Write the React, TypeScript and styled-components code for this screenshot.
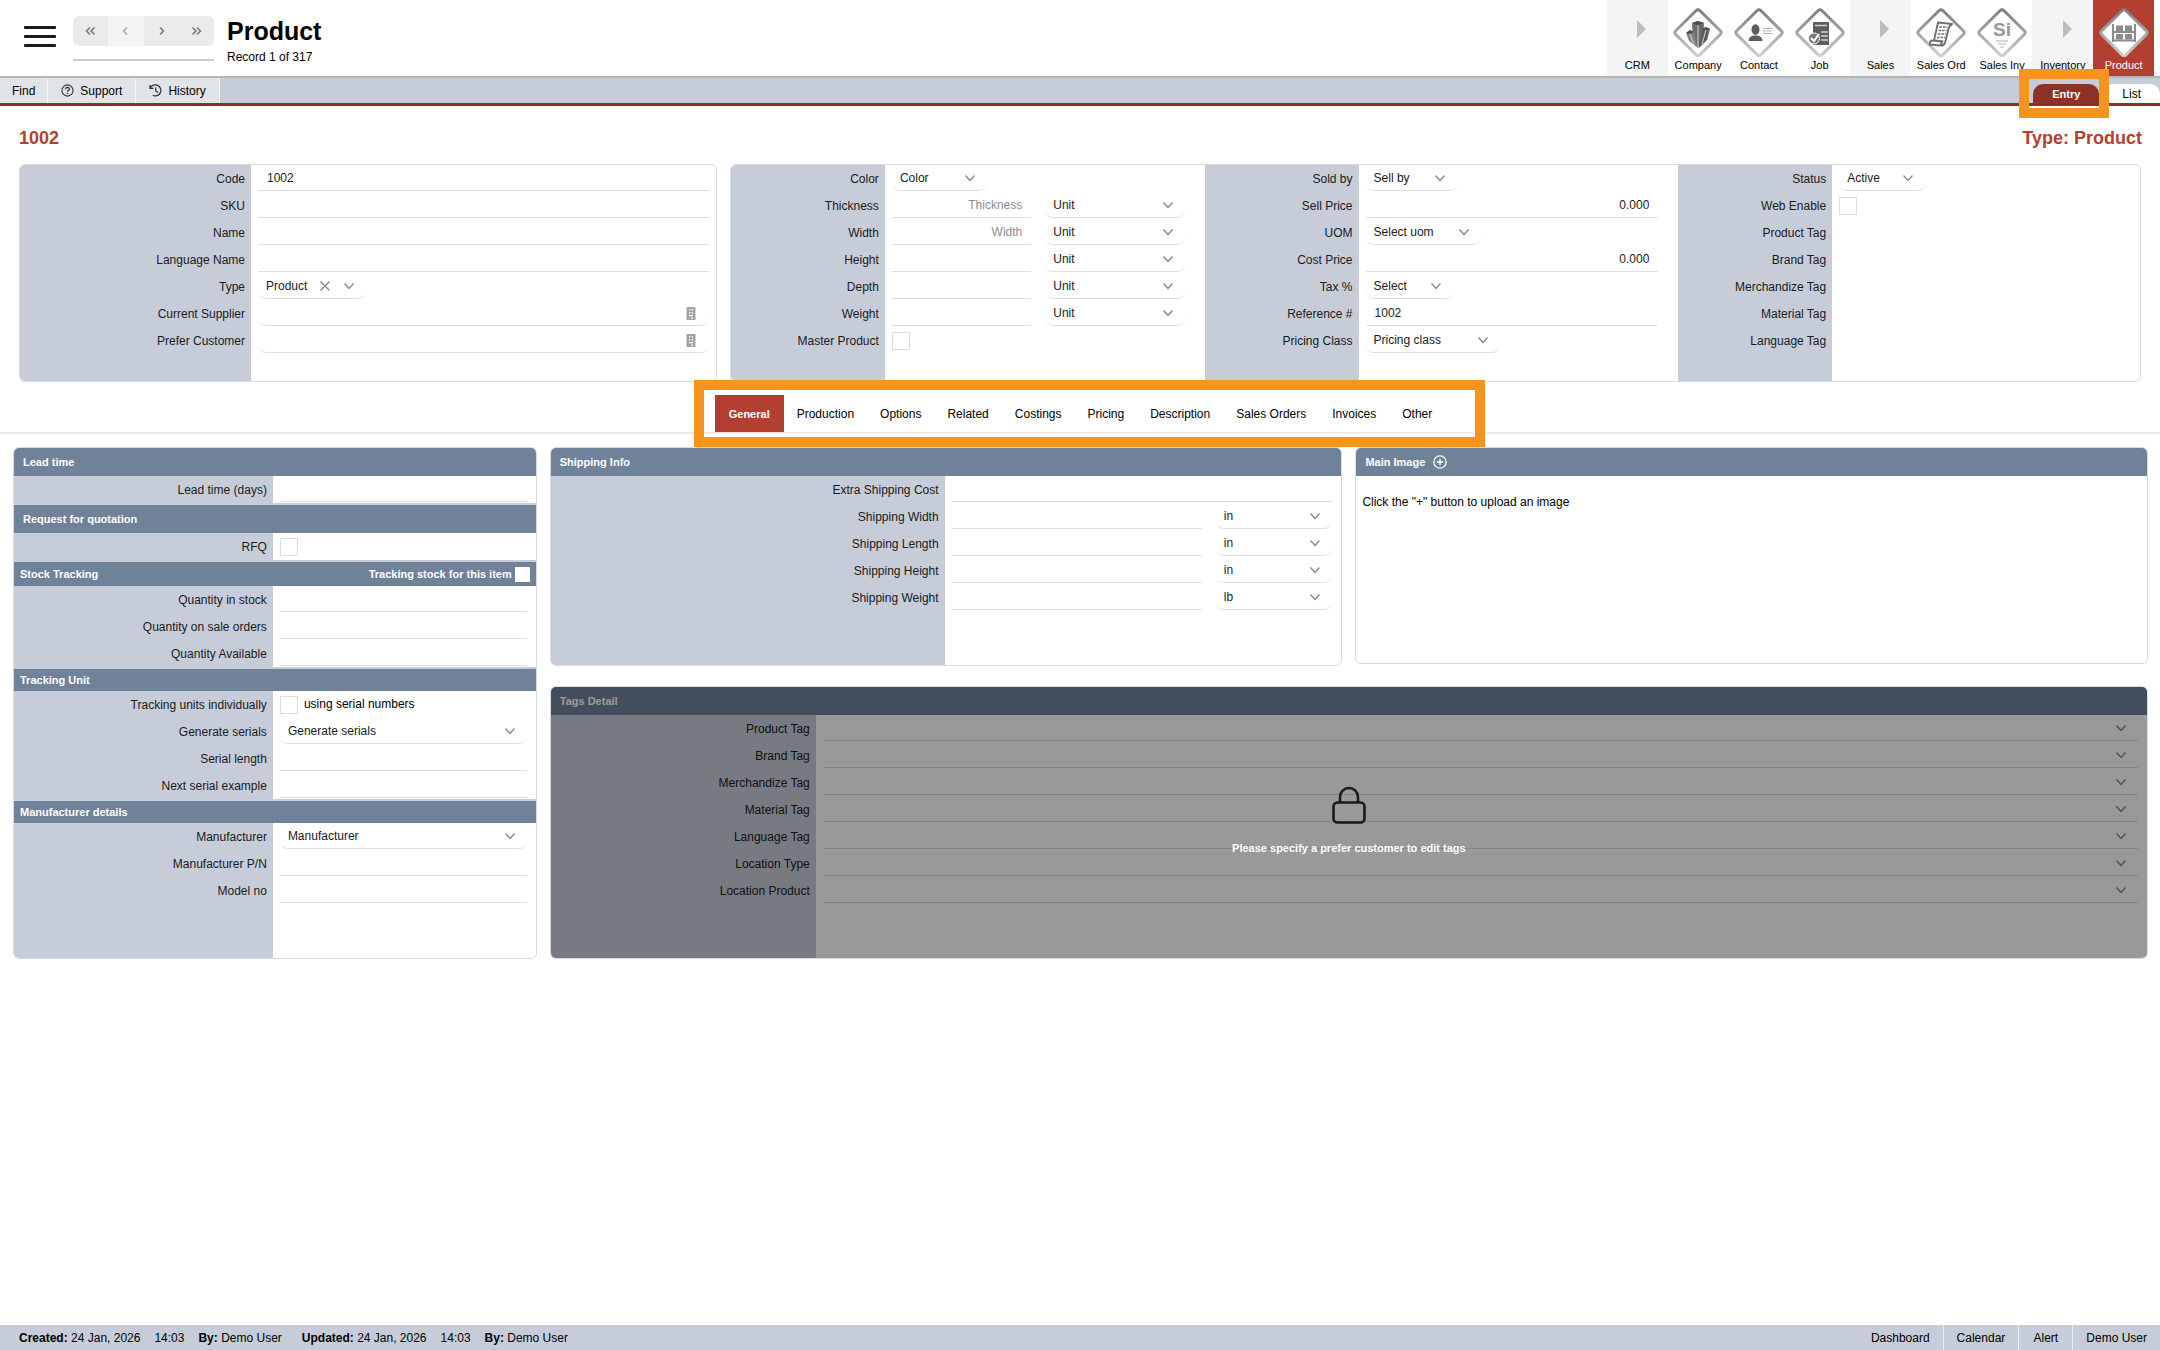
import React, { useId } from "react";
import styled, { createGlobalStyle, css } from "styled-components";

const c = {
  panel: "#c6cdd8",
  bar: "#70829a",
  line: "#dedede",
  red: "#b23f2f",
  darkRed: "#8c3126",
  edge: "#d5dbe3",
  orange: "#f7941e",
  ink: "#1a1a1a",
};

const GlobalStyle = createGlobalStyle`
  * { box-sizing: border-box; }
  body { margin: 0; background: #fff; }
  body, button, input, select {
    font-family: Arial, "Liberation Sans", sans-serif;
    font-size: 12px;
    color: #000;
  }
`;

const Page = styled.div`
  min-height: 100vh;
  display: flex;
  flex-direction: column;
`;

/* ---------- header ---------- */

const Header = styled.header`
  display: flex;
  justify-content: space-between;
  height: 78px;
  border-bottom: 2px solid #b1b7b9;
`;

const HeaderLeft = styled.div`
  display: flex;
  padding: 16px 0 0 24px;
`;

const MenuButton = styled.button`
  display: flex;
  flex-direction: column;
  justify-content: space-between;
  width: 32px;
  height: 21px;
  margin: 10px 17px 0 0;
  padding: 0;
  border: 0;
  background: none;
`;

const MenuLine = styled.span`
  height: 3px;
  border-radius: 1px;
  background: #1c1c1c;
`;

const Pager = styled.div`
  width: 141px;
  height: 45px;
  border-bottom: 2px solid ${c.panel};
`;

const PagerButtons = styled.div`
  display: flex;
  height: 30px;
  border-radius: 6px;
  overflow: hidden;
`;

const PagerButton = styled.button`
  flex: 1;
  display: flex;
  align-items: center;
  justify-content: center;
  padding: 0;
  border: 0;
  background: ${(p) => (p.disabled ? "#f3f3f3" : "#eaeaea")};
  opacity: 1;
  color: ${(p) => (p.disabled ? "#aaa" : "#777")};
`;

const TitleBlock = styled.div`
  padding-left: 13px;
`;

const Title = styled.h1`
  margin: 0;
  font-size: 25px;
  line-height: 30px;
`;

const SubTitle = styled.div`
  line-height: 22px;
`;

const Modules = styled.nav`
  display: grid;
  grid-template-columns: repeat(9, 1fr);
  width: 547px;
  margin-right: 6px;
`;

const Module = styled.a<{ $kind: string }>`
  display: flex;
  flex-direction: column;
  align-items: center;
  padding-top: 8px;
  font-size: 11px;
  line-height: 16px;
  white-space: nowrap;
  text-decoration: none;
  color: ${(p) => (p.$kind === "active" ? "#fff" : "#000")};
  background: ${(p) => (p.$kind === "active" ? c.red : p.$kind === "group" ? "#f4f4f4" : "#fff")};
  svg { display: block; }
`;

/* ---------- toolbar ---------- */

const Toolbar = styled.div`
  display: flex;
  justify-content: space-between;
  height: 28px;
  background: ${c.panel};
  border-bottom: 3px solid ${c.darkRed};
`;

const ToolGroup = styled.div`
  display: flex;
`;

const ToolButton = styled.button`
  display: flex;
  align-items: center;
  gap: 6px;
  padding: 0 12px;
  border: 0;
  border-right: 1px solid #f1f3f5;
  background: #e0e4e9;
  svg { width: 13px; height: 13px; }
  & + & { padding: 0 13px; }
`;

const ViewTabs = styled.div`
  display: flex;
  align-items: flex-end;
  gap: 4px;
`;

const ViewTab = styled.button<{ $active?: boolean }>`
  position: relative;
  height: 19px;
  padding: 0 19px;
  border: 0;
  border-radius: 10px 10px 0 0;
  background: ${(p) => (p.$active ? c.darkRed : "#fff")};
  color: ${(p) => (p.$active ? "#fff" : "#000")};
  font-size: ${(p) => (p.$active ? 11 : 12)}px;
  font-weight: ${(p) => (p.$active ? 700 : 400)};
`;

const Marker = styled.span<{ $edges: string }>`
  position: absolute;
  inset: ${(p) => p.$edges};
  border: 10px solid ${c.orange};
  pointer-events: none;
  z-index: 2;
`;

/* ---------- shared form parts ---------- */

const RecordHead = styled.div`
  display: flex;
  justify-content: space-between;
  align-items: center;
  height: 58px;
  padding: 6px 18px 0 19px;
  font-size: 18px;
  font-weight: 700;
  color: ${c.red};
`;

const Card = styled.section`
  position: relative;
  display: flex;
  flex-direction: column;
  border: 1px solid ${c.edge};
  border-radius: 6px;
  overflow: hidden;
  background: #fff;
`;

const CardBar = styled.h2<{ $h?: number; $inset?: number }>`
  display: flex;
  align-items: center;
  gap: 8px;
  height: ${(p) => p.$h || 28}px;
  margin: 0;
  padding: 0 6px 0 ${(p) => p.$inset || 9}px;
  background: ${c.bar};
  color: #fff;
  font-size: 11px;
  font-weight: 700;
`;

const BarCheckLabel = styled.label`
  display: flex;
  align-items: center;
  gap: 3px;
  margin-left: auto;
`;

const BarCheck = styled.input`
  appearance: none;
  width: 15px;
  height: 15px;
  margin: 0;
  background: #fff;
`;

const Group = styled.div<{ $split: string; $closed?: boolean }>`
  display: flex;
  flex-direction: column;
  flex: ${(p) => (p.$closed ? "none" : 1)};
  border-bottom: ${(p) => (p.$closed ? `2px solid ${c.panel}` : "0")};
  & > div { grid-template-columns: ${(p) => p.$split}; }
`;

const Row = styled.div`
  display: grid;
  height: 27px;
`;

const Rest = styled.div<{ $h: number }>`
  display: grid;
  flex: 1;
  min-height: ${(p) => p.$h}px;
`;

const labelCell = css`
  padding-right: 6px;
  background: ${c.panel};
  color: ${c.ink};
  line-height: 28px;
  text-align: right;
  white-space: nowrap;
`;

const Label = styled.label`${labelCell}`;
const LabelText = styled.span`${labelCell}`;

const Content = styled.div<{ $end: number; $cols?: string }>`
  display: ${(p) => (p.$cols ? "grid" : "flex")};
  grid-template-columns: ${(p) => p.$cols || "none"};
  column-gap: ${(p) => (p.$cols ? 14 : 0)}px;
  min-width: 0;
  padding: 0 ${(p) => p.$end}px 0 7px;
`;

const TextInput = styled.input<{ $right?: boolean; $soft?: boolean }>`
  width: 100%;
  min-width: 0;
  height: 26px;
  padding: 0 9px;
  border: 0;
  border-bottom: 1px solid ${c.line};
  border-radius: ${(p) => (p.$soft ? "0 0 8px 8px" : "0")};
  background: transparent;
  color: ${c.ink};
  text-align: ${(p) => (p.$right ? "right" : "left")};
  outline: none;
  &::placeholder { color: #8c8c8c; opacity: 1; }
`;

const Tick = styled.input`
  appearance: none;
  width: 18px;
  height: 18px;
  margin: 5px 6px 0 0;
  border: 1px solid #dcdcdc;
  background: #fff;
`;

const TickText = styled.label`
  line-height: 26px;
`;

const SelectWrap = styled.div<{ $w?: number }>`
  position: relative;
  width: ${(p) => (p.$w ? `${p.$w}px` : "100%")};
  height: 26px;
`;

const Select = styled.select<{ $flat?: boolean }>`
  appearance: none;
  display: block;
  width: 100%;
  height: 26px;
  padding: 0 28px 0 8px;
  border: 0;
  border-bottom: 1px solid ${c.line};
  border-radius: ${(p) => (p.$flat ? "0" : "8px")};
  background: #fff;
  color: ${c.ink};
  outline: none;
`;

const Clear = styled.button`
  position: absolute;
  top: 8px;
  right: 36px;
  display: flex;
  padding: 0;
  border: 0;
  background: none;
`;

const Chevron = styled.svg`
  position: absolute;
  top: 9px;
  right: 12px;
  width: 10px;
  height: 8px;
  pointer-events: none;
`;

const LookupWrap = styled.div`
  position: relative;
  width: 100%;
`;

const LookupIcon = styled.svg`
  position: absolute;
  top: 7px;
  right: 13px;
`;

/* ---------- page sections ---------- */

const Summary = styled.div`
  display: grid;
  grid-template-columns: 698fr 1411fr;
  gap: 13px;
  padding: 0 19px;
`;

const SummaryWide = styled(Card)`
  display: grid;
  grid-template-columns: 474fr 474fr 462fr;
`;

const TabStrip = styled.div`
  display: flex;
  justify-content: center;
  margin: 13px 0;
  border-bottom: 2px solid #ebebeb;
`;

const Tabs = styled.div`
  position: relative;
  display: flex;
`;

const Tab = styled.button<{ $active?: boolean }>`
  height: 37px;
  padding: 0 13px;
  border: 0;
  background: ${(p) => (p.$active ? c.red : "transparent")};
  color: ${(p) => (p.$active ? "#fff" : "#000")};
  font-size: ${(p) => (p.$active ? 11 : 12)}px;
  font-weight: ${(p) => (p.$active ? 700 : 400)};
  &:first-child { padding: 0 14px; }
`;

const Lower = styled.main`
  display: grid;
  grid-template-columns: 524fr 793fr 793fr;
  column-gap: 13px;
  row-gap: 20px;
  align-items: start;
  padding: 0 12px 0 13px;
`;

const SideCard = styled(Card)`
  grid-row: span 2;
`;

const TagsCard = styled(Card)`
  grid-column: 2 / 4;
`;

const ImageBody = styled.div`
  height: 187px;
  padding: 19px 6px;
  line-height: 14px;
`;

const AddButton = styled.button`
  display: flex;
  padding: 0;
  border: 0;
  background: none;
`;

const Lock = styled.div`
  position: absolute;
  inset: 0;
  display: flex;
  flex-direction: column;
  align-items: center;
  gap: 18px;
  padding-top: 99px;
  background: rgba(0, 0, 0, 0.4);
  color: #fff;
  font-size: 11px;
  font-weight: 700;
`;

const Footer = styled.footer`
  display: flex;
  justify-content: space-between;
  height: 25px;
  margin-top: auto;
  padding-left: 19px;
  background: ${c.panel};
  line-height: 27px;
`;

const Stamps = styled.div`
  display: flex;
  gap: 14px;
`;

const StampEnd = styled.span`
  margin-right: 6px;
`;

const FooterNav = styled.nav`
  display: flex;
`;

const FooterLink = styled.a`
  min-width: 54px;
  padding: 0 13px;
  color: #000;
  text-align: center;
  text-decoration: none;
  & + & { border-left: 1px solid #e9ecf0; }
`;

/* ---------- field components ---------- */

const Drop = ({ id, text, w, flat, clear, name }: { id?: string; text: string; w?: number; flat?: boolean; clear?: boolean; name?: string }) => (
  <SelectWrap $w={w}>
    <Select id={id} $flat={flat} aria-label={name}>
      <option>{text}</option>
    </Select>
    {clear && (
      <Clear aria-label="Clear">
        <svg width="10" height="10" viewBox="0 0 10 10" stroke="#888" strokeWidth="1.4"><path d="M0.5 0.5l9 9M9.5 0.5l-9 9" /></svg>
      </Clear>
    )}
    <Chevron viewBox="0 0 10 8" fill="none" stroke="#888" strokeWidth="1.4"><path d="M0.5 1.5l4.5 5 4.5-5" /></Chevron>
  </SelectWrap>
);

type FieldProps = { label: string; end: number; cols?: string; children: (id: string) => React.ReactNode };

const Field = ({ label, end, cols, children }: FieldProps) => {
  const id = useId();
  return (
    <Row>
      <Label htmlFor={id}>{label}</Label>
      <Content $end={end} $cols={cols}>{children(id)}</Content>
    </Row>
  );
};

const Lookup = ({ id }: { id: string }) => (
  <LookupWrap>
    <TextInput id={id} $soft />
    <LookupIcon width="10" height="13" viewBox="0 0 10 13">
      <path d="M0.500 0h9v13h-9z" fill="#a4a4a4" />
      <path d="M3 2h1.300v1.500H3zM5.700 2H7v1.500H5.700zM3 5h1.300v1.500H3zM5.700 5H7v1.500H5.700zM3 8h4v1.200H3zM5.500 10.500H7V12H5.500z" fill="#fff" />
    </LookupIcon>
  </LookupWrap>
);

const Filler = ({ h }: { h: number }) => (
  <Rest $h={h}><LabelText /><span /></Rest>
);

/* ---------- icons ---------- */

const Diamond = ({ children }: { children: React.ReactNode }) => (
  <svg width="50" height="49" viewBox="0 0 50 49">
    <defs>
      <linearGradient id="rim" x1="0" y1="0" x2="0" y2="1">
        <stop offset="0" stopColor="#7f7f7f" />
        <stop offset="0.5" stopColor="#a3a3a3" />
        <stop offset="1" stopColor="#cfcfcf" />
      </linearGradient>
    </defs>
    <path d="M23.2 2.5q1.8-1.6 3.6 0L47.5 23q1.3 1.6 0 3.2L26.8 46.8q-1.8 1.6-3.6 0L2.5 26.2q-1.3-1.6 0-3.2z" fill="#fff" stroke="url(#rim)" strokeWidth="3" />
    {children}
  </svg>
);

const GroupArrow = () => (
  <svg width="50" height="49" viewBox="0 0 50 49"><path d="M25 12l9 9-9 9z" fill="#bdbdbd" /></svg>
);

const art: Record<string, React.ReactNode> = {
  Company: (
    <g>
      <path d="M19 15l6-2 6 2-1 20-5 5-5-5z" fill="#6d6d6d" />
      <path d="M13 25l4-3 4 2 3 15-3-2-5-4z" fill="#858585" />
      <path d="M37 21l-4-2-4 2-3 19 3-3 5-5z" fill="#5c5c5c" />
      <path d="M19 15l6 2 6-2-6-2zM13 25l4 1 4-2-4-2zM29 21l4 1 4-1-4-2z" fill="#4e4e4e" />
      <path d="M25 17v22M17 26l4 11M33 22l-4 14" stroke="#d4d4d4" strokeWidth="1" />
    </g>
  ),
  Contact: (
    <g fill="#5d5d5d">
      <ellipse cx="21.5" cy="21.500" rx="4" ry="5.200" />
      <path d="M14.500 33q0-4.500 5-5.500h4q5 1 5 5.500z" />
      <path d="M29 20.500h9.500M29 23h9.500M29 25.500h9.500" stroke="#b5b5b5" strokeWidth="1.200" />
    </g>
  ),
  Job: (
    <g>
      <path d="M18 14h16v23H18z" fill="#5d5d5d" />
      <path d="M20 17.500h12M26 24h7M26 28h7M26 32h7" stroke="#d2d2d2" strokeWidth="1.500" />
      <circle cx="19" cy="30.500" r="5.500" fill="#777" stroke="#fff" />
      <path d="M16 30l3 3 5-7" fill="none" stroke="#fff" strokeWidth="2" />
    </g>
  ),
  "Sales Ord": (
    <g fill="none" stroke="#6f6f6f" strokeWidth="1.400">
      <path d="M22 14.500l14.500 1.500q-3 1-4 5l-3 12q-1 5-5 4.500L14 36.500q-1-4.500 4-4z" fill="#fff" strokeWidth="1.900" />
      <path d="M18 32.500l8 1q-2 4 1 4" strokeWidth="2.200" />
      <path d="M23.500 19h8M22.700 22.500h8M22 26h8M21 29.500h8" strokeDasharray="2.500 1" />
    </g>
  ),
  "Sales Inv": (
    <g>
      <text x="25" y="28" textAnchor="middle" fontFamily="Arial, Liberation Sans, sans-serif" fontSize="19" fontWeight="700" fill="#969696">Si</text>
      <path d="M19 33h12M21 36h8M23 39h4" stroke="#b0b0b0" strokeWidth="1.200" />
    </g>
  ),
  Product: (
    <g fill="#8b8b8b">
      <path d="M13 16h2v18h-2zM35 16h2v18h-2zM13 23h24v2H13zM13 31.500h24v2H13z" />
      <path d="M17 17.500h7V23h-7zM26 17.500h7V23h-7zM17 26h7v5.500h-7zM26 26h7v5.500h-7z" />
    </g>
  ),
};

const modules = ["CRM", "Company", "Contact", "Job", "Sales", "Sales Ord", "Sales Inv", "Inventory", "Product"];
const tabs = ["General", "Production", "Options", "Related", "Costings", "Pricing", "Description", "Sales Orders", "Invoices", "Other"];
const tagRows = ["Product Tag", "Brand Tag", "Merchandize Tag", "Material Tag", "Language Tag"];

const pagerButtons = [
  { name: "First", d: "M6 2.500L2.500 6 6 9.500M10.500 2.500L7 6l3.500 3.500" },
  { name: "Previous", d: "M8 2.500L4.500 6 8 9.500", off: true },
  { name: "Next", d: "M5 2.500L8.500 6 5 9.500" },
  { name: "Last", d: "M2.500 2.500L6 6 2.500 9.500M7 2.500L10.500 6 7 9.500" },
];

const SPLIT_MAIN = "231fr 465fr";
const SPLIT_WIDE = "154fr 320fr";
const SPLIT_STATUS = "1fr 2fr";
const SPLIT_SIDE = "259fr 263fr";
const SPLIT_SHIP = "394fr 397fr";
const SPLIT_TAGS = "265fr 1331fr";

export default function App() {
  return (
    <Page>
      <GlobalStyle />
      <Header>
        <HeaderLeft>
          <MenuButton aria-label="Menu"><MenuLine /><MenuLine /><MenuLine /></MenuButton>
          <Pager>
            <PagerButtons>
              {pagerButtons.map((b) => (
                <PagerButton key={b.name} aria-label={b.name} disabled={b.off}>
                  <svg width="13" height="12" viewBox="0 0 13 12" fill="none" stroke="currentColor" strokeWidth="1.5"><path d={b.d} /></svg>
                </PagerButton>
              ))}
            </PagerButtons>
          </Pager>
          <TitleBlock>
            <Title>Product</Title>
            <SubTitle>Record 1 of 317</SubTitle>
          </TitleBlock>
        </HeaderLeft>
        <Modules>
          {modules.map((m) => (
            <Module key={m} href="#" $kind={m === "Product" ? "active" : art[m] ? "item" : "group"}>
              {art[m] ? <Diamond>{art[m]}</Diamond> : <GroupArrow />}
              {m}
            </Module>
          ))}
        </Modules>
      </Header>

      <Toolbar>
        <ToolGroup>
          <ToolButton>Find</ToolButton>
          <ToolButton>
            <svg viewBox="0 0 14 14" fill="none" stroke="#333" strokeWidth="1.2">
              <circle cx="7" cy="7" r="6" />
              <path d="M5 5.600q0-2 2-2t2 1.800q0 1-1 1.500t-1 1.400M7 9.400v1.400" strokeWidth="1.4" />
            </svg>
            Support
          </ToolButton>
          <ToolButton>
            <svg viewBox="0 0 14 14" fill="none" stroke="#333" strokeWidth="1.3">
              <path d="M1 1v3.600h3.800M1.300 4.400A6 6 0 1 1 4 12.200M7.200 3.800v3.600l2.600 1.800" />
            </svg>
            History
          </ToolButton>
        </ToolGroup>
        <ViewTabs>
          <ViewTab $active>Entry<Marker $edges="-15px -10px -15px -14px" /></ViewTab>
          <ViewTab>List</ViewTab>
        </ViewTabs>
      </Toolbar>

      <RecordHead><span>1002</span><span>Type: Product</span></RecordHead>

      <Summary>
        <Card>
          <Group $split={SPLIT_MAIN}>
            <Field label="Code" end={7}>{(id) => <TextInput id={id} defaultValue="1002" />}</Field>
            <Field label="SKU" end={7}>{(id) => <TextInput id={id} />}</Field>
            <Field label="Name" end={7}>{(id) => <TextInput id={id} />}</Field>
            <Field label="Language Name" end={7}>{(id) => <TextInput id={id} />}</Field>
            <Field label="Type" end={7}>{(id) => <Drop id={id} text="Product" w={108} clear />}</Field>
            <Field label="Current Supplier" end={7}>{(id) => <Lookup id={id} />}</Field>
            <Field label="Prefer Customer" end={7}>{(id) => <Lookup id={id} />}</Field>
            <Filler h={27} />
          </Group>
        </Card>

        <SummaryWide>
          <Group $split={SPLIT_WIDE}>
            <Field label="Color" end={20}>{(id) => <Drop id={id} text="Color" w={95} />}</Field>
            {["Thickness", "Width", "Height", "Depth", "Weight"].map((n, i) => (
              <Field key={n} label={n} end={20} cols="1fr 1fr">
                {(id) => (
                  <>
                    <TextInput id={id} $right placeholder={i < 2 ? n : undefined} />
                    <Drop text="Unit" name={`${n} unit`} />
                  </>
                )}
              </Field>
            ))}
            <Field label="Master Product" end={20}>{(id) => <Tick id={id} type="checkbox" />}</Field>
            <Filler h={27} />
          </Group>
          <Group $split={SPLIT_WIDE}>
            <Field label="Sold by" end={20}>{(id) => <Drop id={id} text="Sell by" w={91} />}</Field>
            <Field label="Sell Price" end={20}>{(id) => <TextInput id={id} $right defaultValue="0.000" />}</Field>
            <Field label="UOM" end={20}>{(id) => <Drop id={id} text="Select uom" w={115} />}</Field>
            <Field label="Cost Price" end={20}>{(id) => <TextInput id={id} $right defaultValue="0.000" />}</Field>
            <Field label="Tax %" end={20}>{(id) => <Drop id={id} text="Select" w={87} />}</Field>
            <Field label="Reference #" end={20}>{(id) => <TextInput id={id} defaultValue="1002" />}</Field>
            <Field label="Pricing Class" end={20}>{(id) => <Drop id={id} text="Pricing class" w={134} />}</Field>
            <Filler h={27} />
          </Group>
          <Group $split={SPLIT_STATUS}>
            <Field label="Status" end={7}>{(id) => <Drop id={id} text="Active" w={86} />}</Field>
            <Field label="Web Enable" end={7}>{(id) => <Tick id={id} type="checkbox" />}</Field>
            {tagRows.map((t) => <Row key={t}><LabelText>{t}</LabelText><span /></Row>)}
            <Filler h={27} />
          </Group>
        </SummaryWide>
      </Summary>

      <TabStrip>
        <Tabs>
          {tabs.map((t, i) => <Tab key={t} $active={i === 0}>{t}</Tab>)}
          <Marker $edges="-15px -40px -15px -21px" />
        </Tabs>
      </TabStrip>

      <Lower>
        <SideCard>
          <CardBar>Lead time</CardBar>
          <Group $split={SPLIT_SIDE} $closed>
            <Field label="Lead time (days)" end={9}>{(id) => <TextInput id={id} />}</Field>
          </Group>
          <CardBar>Request for quotation</CardBar>
          <Group $split={SPLIT_SIDE} $closed>
            <Field label="RFQ" end={9}>{(id) => <Tick id={id} type="checkbox" />}</Field>
          </Group>
          <CardBar $h={24} $inset={6}>
            Stock Tracking
            <BarCheckLabel>Tracking stock for this item<BarCheck type="checkbox" /></BarCheckLabel>
          </CardBar>
          <Group $split={SPLIT_SIDE} $closed>
            <Field label="Quantity in stock" end={9}>{(id) => <TextInput id={id} />}</Field>
            <Field label="Quantity on sale orders" end={9}>{(id) => <TextInput id={id} />}</Field>
            <Field label="Quantity Available" end={9}>{(id) => <TextInput id={id} />}</Field>
          </Group>
          <CardBar $h={22} $inset={6}>Tracking Unit</CardBar>
          <Group $split={SPLIT_SIDE} $closed>
            <Field label="Tracking units individually" end={9}>
              {(id) => (
                <>
                  <Tick id={id} type="checkbox" />
                  <TickText htmlFor={id}>using serial numbers</TickText>
                </>
              )}
            </Field>
            <Field label="Generate serials" end={9}>{(id) => <Drop id={id} text="Generate serials" />}</Field>
            <Field label="Serial length" end={9}>{(id) => <TextInput id={id} />}</Field>
            <Field label="Next serial example" end={9}>{(id) => <TextInput id={id} />}</Field>
          </Group>
          <CardBar $h={22} $inset={6}>Manufacturer details</CardBar>
          <Group $split={SPLIT_SIDE}>
            <Field label="Manufacturer" end={9}>{(id) => <Drop id={id} text="Manufacturer" />}</Field>
            <Field label="Manufacturer P/N" end={9}>{(id) => <TextInput id={id} />}</Field>
            <Field label="Model no" end={9}>{(id) => <TextInput id={id} />}</Field>
            <Filler h={54} />
          </Group>
        </SideCard>

        <Card>
          <CardBar>Shipping Info</CardBar>
          <Group $split={SPLIT_SHIP}>
            <Field label="Extra Shipping Cost" end={9}>{(id) => <TextInput id={id} />}</Field>
            {[["Width", "in"], ["Length", "in"], ["Height", "in"], ["Weight", "lb"]].map(([n, u]) => (
              <Field key={n} label={`Shipping ${n}`} end={9} cols="251fr 117fr">
                {(id) => (
                  <>
                    <TextInput id={id} />
                    <Drop text={u} name={`${n} unit`} />
                  </>
                )}
              </Field>
            ))}
            <Filler h={54} />
          </Group>
        </Card>

        <Card>
          <CardBar>
            Main Image
            <AddButton aria-label="Add image">
              <svg width="14" height="14" viewBox="0 0 13 13" fill="none" stroke="#fff" strokeWidth="1.2">
                <circle cx="6.5" cy="6.5" r="5.700" />
                <path d="M6.500 3.500v6M3.500 6.500h6" />
              </svg>
            </AddButton>
          </CardBar>
          <ImageBody>Click the "+" button to upload an image</ImageBody>
        </Card>

        <TagsCard>
          <CardBar>Tags Detail</CardBar>
          <Group $split={SPLIT_TAGS}>
            {[...tagRows, "Location Type", "Location Product"].map((t) => (
              <Field key={t} label={t} end={9}>{(id) => <Drop id={id} text="" flat />}</Field>
            ))}
            <Filler h={54} />
          </Group>
          <Lock>
            <svg width="34" height="38" viewBox="0 0 34 38" fill="none" stroke="#1a1a1a" strokeWidth="2.6">
              <rect x="1.5" y="16.500" width="31" height="20" rx="4" />
              <path d="M8 16.500V11a9 9 0 0 1 18 0v5.500" />
            </svg>
            Please specify a prefer customer to edit tags
          </Lock>
        </TagsCard>
      </Lower>

      <Footer>
        <Stamps>
          <span><b>Created:</b> 24 Jan, 2026</span>
          <span>14:03</span>
          <StampEnd><b>By:</b> Demo User</StampEnd>
          <span><b>Updated:</b> 24 Jan, 2026</span>
          <span>14:03</span>
          <span><b>By:</b> Demo User</span>
        </Stamps>
        <FooterNav>
          {["Dashboard", "Calendar", "Alert", "Demo User"].map((t) => <FooterLink key={t} href="#">{t}</FooterLink>)}
        </FooterNav>
      </Footer>
    </Page>
  );
}
